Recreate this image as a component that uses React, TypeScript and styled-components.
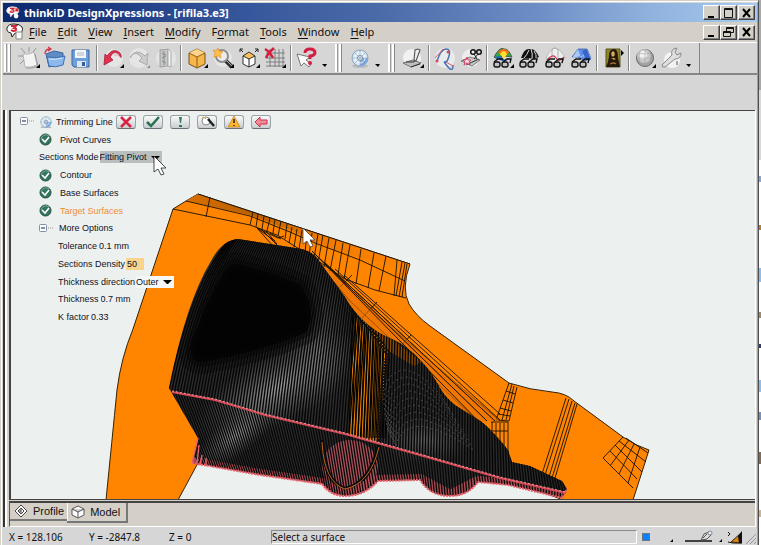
import React from "react";
import styled, { createGlobalStyle } from "styled-components";

const uiFont = `"Noto Sans", "Open Sans", sans-serif`;
const treeFont = `"Liberation Sans", Arial, sans-serif`;

const GlobalStyle = createGlobalStyle`
  * { box-sizing: border-box; }
  body { margin: 0; background: #d6d6d6; color: #111; font-family: ${uiFont}; }
  button, input, select { font: inherit; color: inherit; }
  svg { display: block; }
`;

/* ---------- window frame ---------- */

const Desktop = styled.div`
  display: grid;
  grid-template-columns: 1fr 2px;
  min-height: 100vh;
`;

const DesktopEdge = styled.div`
  background: linear-gradient(#a8a8a8 0 90px, #d8d8d8 90px 160px, #fff 160px 176px, #86a6d8 176px 182px, #fff 182px 225px, #b87d28 225px 230px, #fff 230px 268px,
    #8dbcf0 268px 282px, #fff 282px 312px, #a08860 312px 318px, #fff 318px 344px, #333a70 344px 348px, #fff 348px 380px, #8dbcf0 380px 392px, #fff 392px 412px,
    #7390c0 412px 420px, #fff 420px 452px, #826b50 452px 464px, #fff 464px 510px, #c8b890 510px 517px, #fff 517px);
`;

const WindowFrame = styled.main`
  display: flex;
  flex-direction: column;
  min-width: 0;
  background: #d6d6d6;
  border-top: 1px solid #d4d0c8;
  border-left: 1px solid #d4d0c8;
  border-right: 1px solid #505050;
  box-shadow: inset 1px 1px #fff, inset -1px 0 #a0a0a0;
  padding: 2px 1px 0 2px;
`;

const TitleBar = styled.header`
  display: flex;
  align-items: center;
  height: 19px;
  padding: 0 2px 0 3px;
  gap: 4px;
  color: #fff;
  background: linear-gradient(90deg, #0e2a6e 0%, #17347a 10%, #34549a 30%, #4a6ba8 50%, #6b8cc4 70%, #8fb0dc 85%, #a6caf0 100%);
`;

const Title = styled.h1`
  flex: 1;
  margin: 0;
  font-size: 11px;
  line-height: 16px;
  font-weight: 700;
  white-space: nowrap;
`;

const MenuBar = styled.nav`
  display: flex;
  align-items: center;
  height: 20px;
  padding: 0 2px 0 3px;
  background: #d4d0c8;
`;

const Menus = styled.div`
  display: flex;
  flex: 1;
  gap: 11px;
  padding-left: 5px;
`;

const MenuButton = styled.button`
  padding: 0;
  border: 0;
  background: none;
  font-size: 11px;
  line-height: 16px;
`;

const Mnemonic = styled.span`
  text-decoration: underline;
  text-underline-offset: 2px;
`;

const Controls = styled.div`
  display: flex;
`;

const ControlButton = styled.button`
  display: grid;
  place-items: center;
  width: 17px;
  height: 15px;
  padding: 0;
  border: 1px solid;
  border-color: #fff #404040 #404040 #fff;
  box-shadow: inset -1px -1px #808080;
  background: #d4d0c8;
  &:last-child { margin-left: 1px; }
`;

/* ---------- toolbar ---------- */

const ToolbarRow = styled.div`
  display: flex;
  height: 33px;
  padding-left: 1px;
  border-top: 1px solid #fff;
  border-bottom: 2px solid #868686;
`;

const ToolGroup = styled.div`
  display: flex;
  align-items: center;
  padding-right: 5px;
  &:last-child { border-right: 1px solid #868686; }
`;

const Grip = styled.i`
  width: 8px;
  height: 28px;
  margin-right: 4px;
  background: linear-gradient(90deg, #fff 0 2px, #999 2px 3px, #d6d6d6 3px 4px, #fff 4px 6px, #888 6px 7px, #d6d6d6 7px);
`;

const Separator = styled.i`
  width: 6px;
  height: 26px;
  background: linear-gradient(90deg, transparent 0 2px, #858585 2px 3px, #fff 3px 4px, transparent 4px);
`;

const ToolButton = styled.button<{ $narrow?: boolean }>`
  display: grid;
  place-items: center;
  width: ${(p) => (p.$narrow ? 10 : 26)}px;
  height: 28px;
  padding: 0;
  border: 0;
  background: none;
`;

/* ---------- workspace ---------- */

const Workspace = styled.section`
  flex: 1;
  display: flex;
  flex-direction: column;
  margin: 35px 1px 0 0;
  border-left: 2px solid #333;
  border-right: 1px solid #fff;
  box-shadow: inset 2px 0 #fff;
  background: #d4d0c8;
  padding-left: 4px;
`;

const Viewport = styled.div`
  position: relative;
  flex: 1;
  min-height: 390px;
  overflow: hidden;
  border: solid #444;
  border-width: 1px 0 1px 2px;
  background: #ecf1f0;
`;

const ModelDrawing = styled.svg`
  position: absolute;
  inset: 0;
  width: 100%;
  height: 100%;
`;

const Tree = styled.form`
  position: relative;
  display: grid;
  grid-template-rows: repeat(12, 1fr);
  width: max-content;
  height: 213px;
  margin: 2px 0 0 9px;
  font-family: ${treeFont};
  font-size: 9px;
`;

const TreeRow = styled.div<{ $level: number; $active?: boolean }>`
  display: flex;
  align-items: center;
  padding-left: ${(p) => [0, 19, 38][p.$level]}px;
  color: ${(p) => (p.$active ? "#f08c32" : "#10101c")};
  white-space: nowrap;
`;

const RowIcon = styled.span<{ $tight?: boolean }>`
  display: inline-grid;
  place-items: center;
  width: 12px;
  margin-right: ${(p) => (p.$tight ? 4 : 9)}px;
`;

const ExpandButton = styled.button`
  padding: 0;
  margin-right: 6px;
  border: 0;
  background: none;
`;

const Actions = styled.span`
  display: flex;
  gap: 7px;
  margin-left: 3px;
`;

const ActionButton = styled.button`
  display: grid;
  place-items: center;
  width: 20px;
  height: 14px;
  padding: 0;
  border: 1px solid #9ca3a7;
  border-bottom-color: #687076;
  border-radius: 3px;
  background: linear-gradient(#fafafa, #c9ced1);
`;

const SelectBox = styled.span<{ $dark?: boolean }>`
  display: inline-flex;
  align-items: center;
  height: 12px;
  margin-left: 1px;
  padding-right: 2px;
  background: ${(p) => (p.$dark ? "#b9bfbf" : "#f4f7f6")};
`;

const Select = styled.select`
  appearance: none;
  height: 12px;
  padding: 0 4px 0 0;
  border: 0;
  border-radius: 0;
  background: none;
  field-sizing: content;
`;

const ValueInput = styled.input<{ $marked?: boolean }>`
  width: ${(p) => (p.$marked ? 18 : 40)}px;
  height: 12px;
  margin-left: 1px;
  padding: 0 1px;
  border: 0;
  background: ${(p) => (p.$marked ? "#f8d48c" : "transparent")};
`;

const Pointer = styled.svg`
  position: absolute;
  left: 133px;
  top: 42px;
`;

const Tabs = styled.div`
  display: flex;
  align-items: flex-start;
  height: 26px;
  margin-top: 1px;
  border-top: 2px solid #444;
  border-left: 1px solid #555;
  border-bottom: 1px solid #fff;
`;

const Tab = styled.button<{ $current?: boolean }>`
  display: flex;
  align-items: center;
  gap: 5px;
  height: ${(p) => (p.$current ? 20 : 18)}px;
  padding: 0 ${(p) => (p.$current ? 6 : 3)}px 0 4px;
  border: solid #777;
  border-width: 0 ${(p) => (p.$current ? 2 : 0)}px 2px 0;
  box-shadow: inset 1px 0 ${(p) => (p.$current ? "#fff" : "#d4d0c8")};
  background: #d4d0c8;
  font-family: ${treeFont};
  font-size: 11px;
`;

const StatusBar = styled.footer`
  display: flex;
  align-items: center;
  height: 20px;
  padding-left: 6px;
  font-size: 10px;
  white-space: nowrap;
`;

const Coordinate = styled.span`
  width: 80px;
  &:nth-child(3) { width: 102px; }
`;

const Hint = styled.output`
  flex: 1;
  height: 14px;
  line-height: 13px;
  border: 1px solid;
  border-color: #8a8a8a #fff #fff #8a8a8a;
`;

const StatusIcons = styled.div`
  width: 120px;
`;

/* ---------- icons ---------- */

const Corner = () => <path d="M23 18v4h-4z" fill="#000" />;
const Glasses = () => (
  <g fill="#bfc3c4" stroke="#111" strokeWidth="1.4">
    <path d="M3 16l4-3h5M12 16l4-3h4l-1 4" fill="none" />
    <rect x="3" y="16" width="6" height="5" rx="2" />
    <rect x="11" y="16" width="6" height="5" rx="2" />
  </g>
);

const icons: Record<string, React.ReactNode> = {
  New: <><path d="M6 8q6 1 11-2l3 13q-6 3-12 2z" fill="#f4f4f2" stroke="#b5b5b5" /><path d="M18 8l3 12q-6 3-12 2" fill="none" stroke="#9a9a9a" /><path d="M8 7L4 2M12 6V1M16 6l3-4M6 10H1M7 14l-4 4" stroke="#888" strokeWidth=".8" fill="none" /><Corner /></>,
  Open: <><path d="M3 8l8-3 9 2v11l-14 3z" fill="#5f8cc4" stroke="#3d659c" /><path d="M4 11q9 2 18-1l-2 9q-8 3-14 1z" fill="#8cb8ec" stroke="#3d70b0" /><path d="M6 13q7 1 13-1" stroke="#d6e9fc" fill="none" /><path d="M2 8q0-5 5-5M5 1l3 2-3 2" fill="none" stroke="#d73045" strokeWidth="1.3" /></>,
  Save: <><path d="M3 4h17v17H5l-2-2z" fill="#6d9edb" stroke="#3c6598" /><path d="M6 4h11v8H6z" fill="#f4f6f8" /><path d="M8 7h7M8 9h7" stroke="#a9b5c0" /><path d="M8 15h9v6H8z" fill="#dfe6ee" /><path d="M13 16h3v4h-3z" fill="#345f99" /></>,
  Undo: <><circle cx="13" cy="12" r="9" fill="#e4e6e5" /><path d="M20 12Q17 5 12 7L9 11l3 3-9 5L4 8l2 2q5-7 10-5 5 2 4 7z" fill="#e0304f" stroke="#a81b38" strokeWidth=".8" /><path d="M20 12q-3-4-7-3" fill="none" stroke="#f8a3ae" /><Corner /></>,
  Redo: <><circle cx="12" cy="12" r="10" fill="#e4e5e4" /><path d="M3 12Q5 6 11 8l4 4-3 3 8 4 1-12-3 3Q9 1 3 12z" fill="#c9cccb" stroke="#a9acab" /><path d="M23 19v3h-3z" fill="#888" /></>,
  Page: <><circle cx="13" cy="12" r="10" fill="#e3e5e3" /><path d="M7 4l8-1v17l-8 1z" fill="#c4c7c5" stroke="#9b9e9c" /><path d="M15 3l3 2v16l-3-1z" fill="#f2f2f2" stroke="#aaa" /><path d="M9 7l4 2M9 12l4-2M9 15l4 2M11 5v14" stroke="#8b8b8b" fill="none" /></>,
  Cube: <><path d="M12 3l8 4v11l-8 4-8-4V7z" fill="#f6b64b" stroke="#795017" /><path d="M12 3l8 4-8 4-8-4z" fill="#ffd58a" /><path d="M4 7l8 4 8-4M12 11v11" fill="none" stroke="#8f5d18" /><Corner /></>,
  Zoom: <><circle cx="12" cy="12" r="9" fill="#e4e6e5" /><path d="M14 14l7 7" stroke="#333" strokeWidth="4" /><path d="M15 14l6 6" stroke="#aaa" /><circle cx="11" cy="10" r="6" fill="#e8eef0" stroke="#8d8d8d" strokeWidth="2" /><path d="M7 2l1 3 4 1-3 2 1 4-3-2-4 1 1-4-2-3 3 1z" fill="#ffc04d" stroke="#e99124" strokeWidth=".7" /><Corner /></>,
  Fit: <><path d="M12 7l6 3v8l-6 3-6-3v-8z" fill="#fff" stroke="#333" /><path d="M12 6l6 4-6 3-6-3z" fill="#f9c05d" stroke="#333" /><path d="M12 13v8M3 6V3h3M3 3l3 3M18 3h3v3M21 3l-3 3" stroke="#222" fill="none" /><Corner /></>,
  Grid: <><path d="M7 3v18M12 3v18M16 3v18M20 3v18M3 7h19M3 12h19M3 16h19M3 20h19" stroke="#777" fill="none" strokeWidth=".9" /><path d="M2 3q5 3 8 9M11 2q-6 5-8 10" stroke="#d31f3d" strokeWidth="2.5" fill="none" /><Corner /></>,
  Help: <><path d="M2 8l4 12 3-3 5 4 2-3-5-4 4-3z" fill="#fafafa" stroke="#777" /><path d="M10 7q0-4 5-4 5 0 5 4-1 3-5 3v3" fill="none" stroke="#d51d43" strokeWidth="3" /><circle cx="15" cy="17" r="2" fill="#d51d43" /></>,
  Globe: <><ellipse cx="12" cy="20" rx="8" ry="2" fill="#b8bcc0" /><circle cx="12" cy="12" r="8" fill="#d9e8f5" stroke="#8ea6ba" /><path d="M12 12h8a8 8 0 0 1-8 8z" fill="#74a5e1" /><circle cx="12" cy="12" r="5" fill="none" stroke="#fff" /><circle cx="12" cy="12" r="2.5" fill="#fff" stroke="#7891aa" /><path d="M12 4v16M4 12h16M6 6l12 12M18 6L6 18" stroke="#8ca2b8" strokeWidth=".6" /></>,
  Sketch: <><circle cx="11" cy="12" r="9" fill="#eff2ef" /><path d="M2 17l10-3 8 3-10 4z" fill="#bfc1c0" stroke="#707070" /><path d="M5 16h8l2-3" fill="none" stroke="#333" /><path d="M15 15l4-11-2-1-3 1-1 10z" fill="#eee" stroke="#555" strokeWidth="1.1" /><path d="M10 21l9-3" stroke="#333" /><Corner /></>,
  Curve: <><circle cx="12" cy="12" r="10" fill="#e8ebea" /><path d="M4 15Q8 3 13 3t3 7-4 6 3 5 5-2" fill="none" stroke="#4772b6" strokeWidth="1.5" /><path d="M2 12l8-9M13 16l7 4" stroke="#dc6070" /><circle cx="15" cy="6" r="1.5" fill="#d94b60" /><circle cx="4" cy="15" r="1.5" fill="#d94b60" /></>,
  Trim: <><circle cx="12" cy="12" r="9" fill="#eceeed" /><path d="M2 15l9-4 10 3-8 6z" fill="#c8caca" stroke="#7a7a7a" /><path d="M11 17l9-4M7 19l11-5" stroke="#555" /><circle cx="14" cy="6" r="2.3" fill="none" stroke="#111" strokeWidth="1.5" /><circle cx="20" cy="6" r="2.3" fill="none" stroke="#111" strokeWidth="1.5" /><path d="M15 8l3 5M19 8l-4 5" stroke="#222" /><path d="M8 11l1 3h3l-2 2 1 3-3-2-3 2 1-3-2-2h3z" fill="#f4d8df" stroke="#d32b50" strokeWidth=".8" /></>,
  Curvature: <><path d="M3 11Q9 0 13 3q4-1 8 8l-8-1-7 3z" fill="#39a844" stroke="#333" strokeWidth=".7" /><path d="M7 6q6-6 11 0l-5 6z" fill="#ff6b18" /><path d="M9 8q4-6 7 0l-3 5z" fill="#ffe12e" /><path d="M3 11l6-1 5 4 7-3-8 5z" fill="#2366c0" /><Glasses /><Corner /></>,
  Zebra: <><path d="M4 12Q7 2 13 3q5-1 9 8l-5 2-6-1z" fill="#111" /><path d="M12 4q-2 5-5 8M14 3q2 5 1 10M17 5q3 4 2 7" stroke="#ddd" fill="none" /><Glasses /></>,
  Deviation: <><path d="M3 12Q8 2 12 2t10 9l-6 9z" fill="#eef0ef" stroke="#aaa" strokeWidth=".7" /><path d="M9 12V4q3-4 6 0v9" fill="none" stroke="#aaa" /><path d="M4 14q6-7 9-2t8-1" fill="none" stroke="#d52d49" strokeWidth="1.2" /><Glasses /></>,
  Reflection: <><path d="M3 11l6-8h9l4 9-6 3-7-4z" fill="#5d8ee8" stroke="#33508f" strokeWidth=".7" /><path d="M9 3l3 9 6-9 4 9-10-2-9 2z" fill="#a8c8f5" /><path d="M13 5l4 9h5l-4-11z" fill="#3768c9" /><Glasses /></>,
  Render: <><path d="M5 3h14v18H5z" fill="#8c8420" stroke="#5b541a" /><path d="M8 10q0-7 5-7 4 0 4 9l2 9H5l2-5z" fill="#241a0c" /><ellipse cx="12" cy="8" rx="1.8" ry="2.8" fill="#d5ab60" /><path d="M10 12l3 2 2-1-2-1z" fill="#c8974c" /><path d="M9 18q4-2 6 0" stroke="#a06c31" fill="none" strokeWidth="1.3" /><path d="M20 4l3 3-3 3z" fill="#000" /></>,
  Sphere: <><circle cx="12" cy="12" r="8.500" fill="#a4a4a4" stroke="#666" /><circle cx="11" cy="10" r="7" fill="#c8c8c8" /><circle cx="10" cy="9" r="4" fill="#f2f2f2" /><path d="M12 3v18M3 12h18M5 7q7 2 14 0M7 5q-2 7 0 14M17 5q2 7 0 14" stroke="#999" strokeWidth=".5" fill="none" /><Corner /></>,
  Wrench: <><circle cx="13" cy="14" r="8" fill="#f2f3f2" /><path d="M3 19L13 9q-2-6 5-7l-2 4 2 3 4-2q0 6-6 6L6 21q-3 1-3-2z" fill="#dfdfdf" stroke="#888" /><path d="M18 15v4" stroke="#555" /></>,
};

const ToolIcon = ({ name }: { name: string }) => (
  <svg width="24" height="24" viewBox="0 0 24 24">{icons[name]}</svg>
);

const More = () => (
  <ToolButton $narrow aria-label="More tools">
    <svg width="8" height="24"><path d="M1 18h5l-2 3z" fill="#000" /></svg>
  </ToolButton>
);

const toolGroups: string[][] = [
  ["New", "Open", "Save", "|", "Undo", "Redo", "Page", "|", "Cube", "Zoom", "Fit", "Grid", "|", "Help"],
  ["Globe"],
  ["Sketch", "|", "Curve", "Trim", "|", "Curvature", "Zebra", "Deviation", "Reflection", "|", "Render", "|", "Sphere", "Wrench"],
];

const AppIcon = ({ document }: { document?: boolean }) => (
  <svg width={document ? 18 : 14} height={document ? 18 : 14} viewBox="0 0 18 18">
    <path d="M1 5Q2 1 8 1t8 3q2 5-4 7l-3-1-3 4-1-4Q0 9 1 5z" fill="#fff" stroke={document ? "#222" : "#ddd"} />
    <path d="M5 3h5L8 5q3 0 2 2-2 2-5 0" fill="none" stroke="#d32633" strokeWidth="1.8" />
    {document ? <path d="M10 9h6v7h-6z" fill="#f7f7f7" stroke="#888" /> : <><path d="M12 3h4v4h-4z" fill="#d32633" /><circle cx="13" cy="13" r="3" fill="#fff" /></>}
  </svg>
);

const WindowControls = ({ restore }: { restore?: boolean }) => (
  <Controls>
    <ControlButton aria-label="Minimize"><svg width="11" height="10"><path d="M2 8h6v2H2z" /></svg></ControlButton>
    <ControlButton aria-label={restore ? "Restore" : "Maximize"}>
      <svg width="11" height="10" fill="none" stroke="#111">
        {restore ? <path d="M3.500 4V.5h7v5H8M3.500 1.500h7M.5 4.500h7v5h-7zM.5 5.500h7" /> : <path d="M1.500 .5h8v9h-8zM1.500 1.500h8" />}
      </svg>
    </ControlButton>
    <ControlButton aria-label="Close"><svg width="11" height="10"><path d="M2 1l7 8M9 1L2 9" stroke="#000" strokeWidth="2" /></svg></ControlButton>
  </Controls>
);

const Check = () => (
  <svg width="13" height="13" viewBox="0 0 13 13">
    <circle cx="6.500" cy="6.500" r="5.500" fill="#33765f" stroke="#234f42" />
    <path d="M2 6a5 5 0 0 1 8-3" stroke="#78ad9a" fill="none" />
    <path d="M3 6l3 3 4-5" stroke="#fff" strokeWidth="1.600" fill="none" />
  </svg>
);

const Collapse = () => (
  <ExpandButton type="button" aria-label="Collapse">
    <svg width="14" height="9"><rect x=".5" y=".5" width="7" height="7" rx="1" fill="#f8fbff" stroke="#8190a4" /><path d="M2 4h4" stroke="#223" /><path d="M9 4h1M11 4h1M13 4h1" stroke="#999" /></svg>
  </ExpandButton>
);

const DropArrow = () => <svg width="9" height="5"><path d="M0 1h9L5 5H4z" fill="#000" /></svg>;

const actions: [string, React.ReactNode][] = [
  ["Cancel", <path d="M3 1l10 10M13 1L3 11" stroke="#d92344" strokeWidth="2.500" />],
  ["Apply", <path d="M2 6l4 4 8-9" stroke="#287052" strokeWidth="2.500" fill="none" />],
  ["Check", <path d="M7 1h3l-1 6H8zM7 9h3v2H7z" fill="#37795c" />],
  ["Preview", <><circle cx="7" cy="5" r="4" fill="#fff" stroke="#888" /><path d="M9 3l6 7" stroke="#222" strokeWidth="2.500" /><path d="M3 2l2-1 2 2" stroke="#d9a53c" fill="none" /></>],
  ["Warnings", <><path d="M8 0l6 11H2z" fill="#ffb72d" stroke="#c57d13" strokeWidth=".7" /><path d="M8 3v4M8 9v1" stroke="#222" strokeWidth="1.500" /></>],
  ["Back", <path d="M2 6l5-5v3h7v4H7v3z" fill="#f28b9a" stroke="#ce3049" />],
];

/* ---------- model geometry ---------- */

type Pt = [number, number];

const at = (points: Pt[], x: number): number => {
  for (let i = 1; i < points.length; i++) {
    const [x0, y0] = points[i - 1];
    const [x1, y1] = points[i];
    if (x <= x1) return y0 + ((y1 - y0) * (x - x0)) / (x1 - x0);
  }
  return points[points.length - 1][1];
};

const crest: Pt[] = [[222, 243], [238, 237], [270, 242], [302, 247], [315, 255], [345, 295], [360, 315], [375, 329], [392, 337], [408, 348], [425, 363], [440, 386], [455, 404], [482, 420], [508, 448], [513, 460], [530, 464], [562, 479]];
const seam: Pt[] = [[169, 390], [215, 400], [265, 415], [345, 434], [420, 455], [500, 478], [566, 493]];
const hem: Pt[] = [[192, 463], [260, 474], [322, 483], [332, 492], [345, 496], [363, 492], [378, 481], [420, 480], [432, 493], [450, 496], [468, 492], [478, 482], [508, 485], [562, 498]];

const sections = Array.from({ length: 142 }, (_, i) => {
  const t = i / 141;
  const bx = 169 + 397 * t;
  const ease = Math.min(1, t / 0.5);
  const tx = t < 0.5 ? 228 + (372 - 228) * ease : 372 + (562 - 372) * (t - 0.5) * 2;
  const by = at(seam, bx);
  const ty = at(crest, tx);
  const cx = (bx + tx) / 2 - 8 * (1 - ease);
  const cy = ty + (by - ty) * (0.3 + 0.2 * ease);
  return `M${bx} ${by}Q${cx} ${cy} ${tx} ${ty}`;
}).join("");

const skirt = Array.from({ length: 142 }, (_, i) => {
  const t = i / 141;
  const x = 169 + 397 * t;
  const lx = x + 30 * (1 - t) * (1 - t);
  return `M${x} ${at(seam, x)}L${lx} ${at(hem, lx)}`;
}).join("");

const contours = Array.from({ length: 9 }, (_, i) => {
  const d = i * 7;
  return `M${388 + i} ${430 + i * 2}Q${375 + i * 3} ${372 + d} ${405 + i * 2} ${370 + d}Q${430 + i * 2} ${375 + d} ${450 + i * 3} ${410 + i * 5}`;
}).join("");

const rib = Array.from({ length: 13 }, (_, i) => {
  const x = 349 + i * 3;
  return `M${x + 4} ${308 + i * 4}L${x} 438`;
}).join("");

const bodyPath = "M169 388Q186 302 211 261Q222 240 238 239L270 244 302 249Q314 252 320 262L345 297Q362 327 392 339 408 346 422 362 431 371 440 388 446 398 455 405L482 422Q494 432 508 450L512 462 530 466 562 481 567 489 562 498 530 490 508 485 478 482Q468 496 450 496 430 496 420 480L378 481Q365 496 345 496 330 496 322 484L260 475 192 463 198 438Z";

const corePath = "M238 264Q275 274 300 285 318 312 306 332 260 352 203 362 186 362 193 340 208 296 226 270 230 264 238 264Z";

const arrowPath = "M0 0v16l4-3 3 6 3-1-3-6h5z";

const Model = () => (
  <ModelDrawing viewBox="11 111 744 388" preserveAspectRatio="xMinYMax slice" role="img" aria-label="Trimmed surface model">
    <defs>
      <clipPath id="body"><path d={bodyPath} /></clipPath>
      <radialGradient id="sheen"><stop stopColor="#a4a4a4" stopOpacity=".95" /><stop offset="1" stopColor="#777" stopOpacity="0" /></radialGradient>
      <linearGradient id="flange" x1="0" y1="0" x2="1" y2="0"><stop stopColor="#d97000" /><stop offset=".3" stopColor="#b85e00" /><stop offset=".6" stopColor="#f07a00" /><stop offset="1" stopColor="#ff8500" /></linearGradient>
    </defs>
    <path d="M173 209L186 201 198 194 410 264Q401 288 409 304 416 316 430 326L509 383Q530 390 552 392 566 393 574 401L623 437Q636 446 649 450L633 500H563L500 475 205 450 178 500H106Q112 440 117 390 121 358 133 329Z" fill="#ff8500" stroke="#352000" />
    <path d="M186 201L198 194 410 264 404 270 340 252 290 230 250 215Z" fill="url(#flange)" />
    <g fill="none" stroke="#171004" strokeWidth=".9">
      <path d="M198 194L410 264M173 209L250 225 277 235 315 259 345 279 375 290 406 298M186 201L250 216 290 232 315 243 360 260 405 281M210 197L206 217" />
      <path d="M253 212L250 225M258 214L256 227M264 216L262 229M270 218L267 231M275 219L273 233M281 221L278 236M287 224L285 239M292 227L289 243M297 229L294 247M302 230L299 249M307 232L305 253M312 233L309 256M318 234L314 259M323 235L318 263M329 238L324 267M336 240L330 271M343 243L338 275M350 245L344 279M361 249L356 284M374 253L368 288M386 256L379 291M397 260L394 296M402 262L396 296M405 263L399 297M407 264L402 297" />
      <path d="M257 228L278 238 284 236M257 228L273 246M261 229L279 247M266 231L277 244M270 233L281 239M258 229L275 241" />
      <path d="M312 251L380 318 500 421M308 252L350 301 487 430M318 257L487 421M324 262L495 421M335 269L500 420M344 275L500 414M340 287L352 275M362 318L377 302M400 347L411 335" />
      <path d="M509 383L496 420 509 421 517 387M512 384L502 420M514 386L506 420M506 391L515 394M503 400L513 403M500 408L511 411M498 414L510 416M491 422H508V458M492 422V431M496 423V440M500 423V444M504 423V450M491 431H508" />
      <path d="M566 398L542 474M569 399L545 475M572 401L549 477M575 403L552 478M577 404L555 478" />
      <path d="M623 437L603 458 633 488M629 440L610 466M634 444L619 474M640 447L628 483M615 445L642 472M610 451L637 479M619 441L646 462M626 438L648 453" />
    </g>
    <path d="M325 267L500 421 480 421 455 408 440 390 420 364 392 340 360 320Z" fill="#e76e00" opacity=".65" />
    <path d="M318 257L487 421M324 262L495 421M312 251L487 430" stroke="#241600" strokeWidth="1" fill="none" />
    <path d={bodyPath} fill="#2b2a2a" />
    <g clipPath="url(#body)">
      <ellipse cx="278" cy="388" rx="95" ry="36" transform="rotate(-30 278 388)" fill="url(#sheen)" />
      <ellipse cx="235" cy="436" rx="52" ry="20" transform="rotate(-40 235 436)" fill="url(#sheen)" />
      <ellipse cx="318" cy="350" rx="34" ry="70" fill="url(#sheen)" opacity=".5" />
      <ellipse cx="425" cy="440" rx="50" ry="24" fill="url(#sheen)" opacity=".5" />
      <path d="M357 312L388 350 378 442 349 435 352 370Z" fill="#e67e00" />
      <path d="M357 312L392 339 422 362 414 366 390 352Z" fill="#8a4b05" />
      <ellipse cx="350" cy="466" rx="28" ry="26" fill="#a8505a" />
      <path d="M322 440Q324 482 345 489 370 484 379 445" fill="none" stroke="#141010" strokeWidth="4" />
      <path d="M192 463L260 475 322 484 345 496 378 481 420 480 450 496 478 482 508 485 562 498" stroke="#c9525c" strokeWidth="12" fill="none" opacity=".8" />
      <path d={skirt} stroke="#070707" strokeWidth="1.300" fill="none" />
      <path d={sections} stroke="#060606" strokeWidth="1.400" fill="none" />
      <path d={rib} stroke="#050300" strokeWidth="1.200" fill="none" />
      <path d="M350 310Q372 328 388 354 380 395 379 442" fill="none" stroke="#111" strokeWidth="5" strokeDasharray="2 1" />
      <path d="M322 442Q324 482 345 489 370 484 379 447" fill="none" stroke="#b5681c" />
      <path d={corePath} fill="#030303" stroke="#050505" strokeWidth="24" strokeOpacity=".35" strokeLinejoin="round" />
      <path d={corePath} fill="#030303" stroke="#050505" strokeWidth="10" strokeOpacity=".5" strokeLinejoin="round" />
      <path d={contours} stroke="#5a5a5a" strokeWidth=".8" strokeDasharray="2 3" fill="none" />
    </g>
    <path d="M192 463L260 475 322 484Q330 496 345 496 365 496 378 481L420 480Q430 496 450 496 468 496 478 482L508 485 562 498 567 489" fill="none" stroke="#ed626a" strokeWidth="2" strokeDasharray="2 1" />
    <path d="M198 438L192 463M199 445L197 463M202 455L200 465M206 458V466" stroke="#ed626a" strokeWidth="1.400" />
    <path d="M172 392L215 400 265 415 345 434 420 455 500 478 566 493" fill="none" stroke="#d94b57" strokeWidth="2" />
    <path d="M172 391L215 399 265 414 345 433 420 454 500 477 566 492" fill="none" stroke="#f59a9e" strokeWidth="1" strokeDasharray="2 2" />
    <path d={arrowPath} transform="translate(303 228)" fill="#fff" stroke="#444" strokeWidth=".8" />
  </ModelDrawing>
);

const menus: [string, string, string][] = [
  ["", "F", "ile"], ["", "E", "dit"], ["", "V", "iew"], ["", "I", "nsert"], ["", "M", "odify"],
  ["F", "o", "rmat"], ["", "T", "ools"], ["", "W", "indow"], ["", "H", "elp"],
];

const Step = ({ name, active }: { name: string; active?: boolean }) => (
  <TreeRow $level={1} $active={active}><RowIcon><Check /></RowIcon>{name}</TreeRow>
);

const Value = ({ id, label, value, marked }: { id: string; label: string; value: string; marked?: boolean }) => (
  <TreeRow $level={2}><label htmlFor={id}>{label}</label><ValueInput id={id} defaultValue={value} $marked={marked} /></TreeRow>
);

export default function App() {
  return (
    <Desktop>
      <GlobalStyle />
      <WindowFrame>
        <TitleBar>
          <AppIcon />
          <Title>thinkiD DesignXpressions - [rifila3.e3]</Title>
          <WindowControls />
        </TitleBar>
        <MenuBar>
          <AppIcon document />
          <Menus>
            {menus.map(([before, key, after]) => (
              <MenuButton key={before + key + after}>{before}<Mnemonic>{key}</Mnemonic>{after}</MenuButton>
            ))}
          </Menus>
          <WindowControls restore />
        </MenuBar>
        <ToolbarRow>
          {toolGroups.map((group, g) => (
            <ToolGroup key={g}>
              <Grip />
              {group.map((name, i) => name === "|" ? <Separator key={i} /> : <ToolButton key={i} aria-label={name}><ToolIcon name={name} /></ToolButton>)}
              <More />
            </ToolGroup>
          ))}
        </ToolbarRow>
        <Workspace>
          <Viewport>
            <Model />
            <Tree>
              <TreeRow $level={0}>
                <Collapse />
                <RowIcon $tight>
                  <svg width="12" height="12" viewBox="3 3 18 18">{icons.Globe}</svg>
                </RowIcon>
                Trimming Line
                <Actions>
                  {actions.map(([name, icon]) => (
                    <ActionButton type="button" key={name} aria-label={name}><svg width="16" height="12">{icon}</svg></ActionButton>
                  ))}
                </Actions>
              </TreeRow>
              <Step name="Pivot Curves" />
              <TreeRow $level={1}>
                <label htmlFor="mode">Sections Mode</label>
                <SelectBox $dark><Select id="mode"><option>Fitting Pivot</option></Select><DropArrow /></SelectBox>
              </TreeRow>
              <Step name="Contour" />
              <Step name="Base Surfaces" />
              <Step name="Target Surfaces" active />
              <TreeRow $level={1}><Collapse />More Options</TreeRow>
              <Value id="tolerance" label="Tolerance" value="0.1 mm" />
              <Value id="density" label="Sections Density" value="50" marked />
              <TreeRow $level={2}>
                <label htmlFor="direction">Thickness direction</label>
                <SelectBox><Select id="direction"><option>Outer</option></Select><DropArrow /></SelectBox>
              </TreeRow>
              <Value id="thickness" label="Thickness" value="0.7 mm" />
              <Value id="factor" label="K factor" value="0.33" />
              <Pointer width="14" height="21"><path d={arrowPath} transform="translate(1 1)" fill="#fff" stroke="#222" strokeWidth=".8" /></Pointer>
            </Tree>
          </Viewport>
          <Tabs>
            <Tab>
              <svg width="14" height="14" viewBox="0 0 14 14" fill="#fff" stroke="#444"><path d="M1 7l6-6 6 6-6 6z" /><path d="M4 7l3-3 3 3-3 3zM4 7h3v3M7 4v3" /></svg>
              Profile
            </Tab>
            <Tab $current>
              <svg width="14" height="14" viewBox="0 0 14 14" fill="#fff" stroke="#555"><path d="M7 1l6 3v6l-6 3-6-3V4zM1 4l6 3 6-3M7 7v6" /></svg>
              Model
            </Tab>
          </Tabs>
        </Workspace>
        <StatusBar>
          <Coordinate>X = 128.106</Coordinate>
          <Coordinate>Y = -2847.8</Coordinate>
          <Coordinate>Z = 0</Coordinate>
          <Hint>Select a surface</Hint>
          <StatusIcons>
            <svg width="120" height="18" viewBox="0 0 120 18">
              <rect x="5.500" y="5.500" width="7" height="7" fill="#0a82ff" stroke="#6b7680" />
              <path d="M36 11v3h-3zM85 11v3h-3z" />
              <path d="M48 13h27" stroke="#111" strokeWidth="1.500" />
              <path d="M64 12l3-6 5-2 2 3-4 4zM66 10l4-4" fill="#ddd" stroke="#555" /><circle cx="73" cy="5" r="2" fill="#eee" stroke="#789" />
              <path d="M91 4l2 2-2 2M91 14l5 1h9" stroke="#111" fill="none" />
              <path d="M94 14l10-9v10z" fill="#d98218" stroke="#35230c" /><path d="M101 8l4-5v12h-3z" fill="#111" />
              <path d="M109 16L119 6M113 16l6-6M117 16l2-2" stroke="#999" />
            </svg>
          </StatusIcons>
        </StatusBar>
      </WindowFrame>
      <DesktopEdge />
    </Desktop>
  );
}
